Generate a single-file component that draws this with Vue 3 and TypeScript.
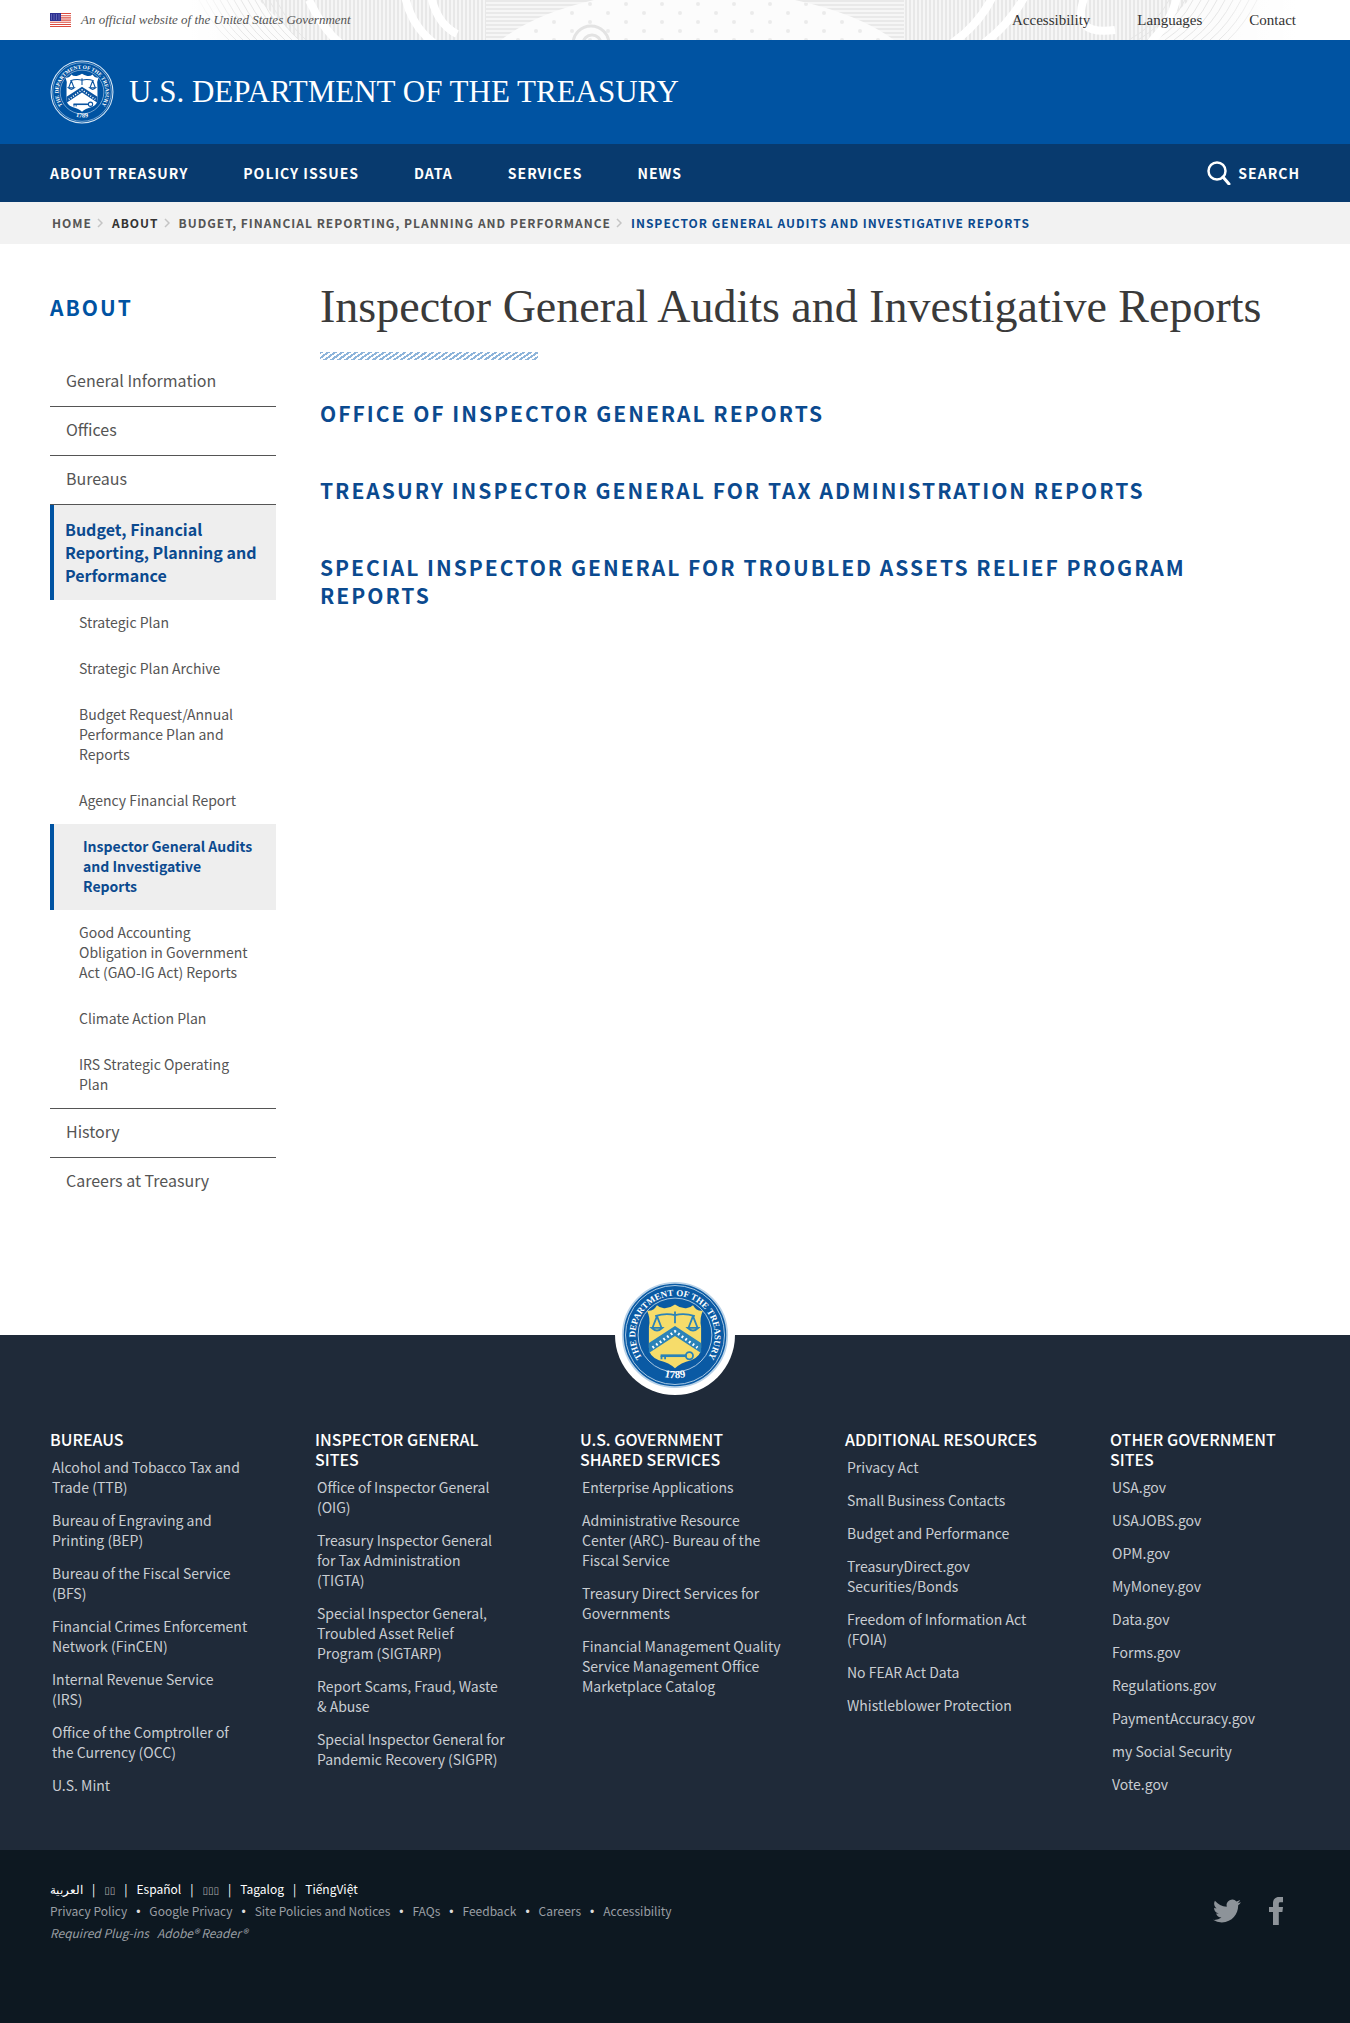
<script setup lang="ts">
interface NavItem { label: string; children?: NavItem[]; active?: boolean }
interface LinkGroup { title: string; links: string[] }

const utilityLinks: string[] = ['Accessibility', 'Languages', 'Contact']
const mainNav: string[] = ['About Treasury', 'Policy Issues', 'Data', 'Services', 'News']
const crumbs: string[] = ['Home', 'About', 'Budget, Financial Reporting, Planning and Performance']

const sideNav: NavItem[] = [
  { label: 'General Information' },
  { label: 'Offices' },
  { label: 'Bureaus' },
  {
    label: 'Budget, Financial Reporting, Planning and Performance',
    active: true,
    children: [
      { label: 'Strategic Plan' },
      { label: 'Strategic Plan Archive' },
      { label: 'Budget Request/Annual Performance Plan and Reports' },
      { label: 'Agency Financial Report' },
      { label: 'Inspector General Audits and Investigative Reports', active: true },
      { label: 'Good Accounting Obligation in Government Act (GAO-IG Act) Reports' },
      { label: 'Climate Action Plan' },
      { label: 'IRS Strategic Operating Plan' },
    ],
  },
  { label: 'History' },
  { label: 'Careers at Treasury' },
]

const reports: string[] = [
  'Office of Inspector General Reports',
  'Treasury Inspector General for Tax Administration Reports',
  'Special Inspector General for Troubled Assets Relief Program Reports',
]

const footerGroups: LinkGroup[] = [
  {
    title: 'Bureaus',
    links: [
      'Alcohol and Tobacco Tax and Trade (TTB)',
      'Bureau of Engraving and Printing (BEP)',
      'Bureau of the Fiscal Service\n(BFS)',
      'Financial Crimes Enforcement Network (FinCEN)',
      'Internal Revenue Service\n(IRS)',
      'Office of the Comptroller of\nthe Currency (OCC)',
      'U.S. Mint',
    ],
  },
  {
    title: 'Inspector General Sites',
    links: [
      'Office of Inspector General\n(OIG)',
      'Treasury Inspector General\nfor Tax Administration\n(TIGTA)',
      'Special Inspector General, Troubled Asset Relief\nProgram (SIGTARP)',
      'Report Scams, Fraud, Waste\n& Abuse',
      'Special Inspector General for Pandemic Recovery (SIGPR)',
    ],
  },
  {
    title: 'U.S. Government Shared Services',
    links: [
      'Enterprise Applications',
      'Administrative Resource Center (ARC)- Bureau of the Fiscal Service',
      'Treasury Direct Services for Governments',
      'Financial Management Quality Service Management Office Marketplace Catalog',
    ],
  },
  {
    title: 'Additional Resources',
    links: [
      'Privacy Act',
      'Small Business Contacts',
      'Budget and Performance',
      'TreasuryDirect.gov Securities/Bonds',
      'Freedom of Information Act (FOIA)',
      'No FEAR Act Data',
      'Whistleblower Protection',
    ],
  },
  {
    title: 'Other Government Sites',
    links: [
      'USA.gov', 'USAJOBS.gov', 'OPM.gov', 'MyMoney.gov', 'Data.gov',
      'Forms.gov', 'Regulations.gov', 'PaymentAccuracy.gov', 'my Social Security', 'Vote.gov',
    ],
  },
]

const languages: string[] = ['العربية', '▯▯', 'Español', '▯▯▯', 'Tagalog', 'TiếngViệt']
const policies: string[] = [
  'Privacy Policy', 'Google Privacy', 'Site Policies and Notices', 'FAQs',
  'Feedback', 'Careers', 'Accessibility',
]
const arcs: number[] = [0, 1, 2, 3, 4, 5, 6, 7, 8, 9, 10, 11]
</script>

<template>
  <div class="page">
    <svg class="defs" width="0" height="0" aria-hidden="true">
      <defs>
        <path id="seal-arc" d="M26.5 89 A44 44 0 1 1 93.5 89" />
        <path id="seal-year" d="M30 98 A50 50 0 0 0 90 98" />
        <symbol id="seal" viewBox="0 0 120 120">
          <circle class="s-disc" cx="60" cy="60" r="58" />
          <circle class="s-ring" cx="60" cy="60" r="58" stroke-width="2" />
          <circle class="s-ring" cx="60" cy="60" r="55" stroke-width="1" />
          <circle class="s-ring" cx="60" cy="60" r="41" stroke-width="1" />
          <text class="s-text" font-size="10"><textPath href="#seal-arc" startOffset="50%" text-anchor="middle">THE DEPARTMENT OF THE TREASURY</textPath></text>
          <text class="s-text" font-size="12"><textPath href="#seal-year" startOffset="50%" text-anchor="middle">1789</textPath></text>
          <path class="s-shield" d="M29 33 Q36 34 40 27 Q44 31 50 30 Q56 29 60 26 Q64 29 70 30 Q76 31 80 27 Q84 34 91 33 Q87 41 89 51 V74 Q89 84 78 88 Q66 91 60 97 Q54 91 42 88 Q31 84 31 74 V51 Q33 41 29 33Z" />
          <path class="s-band" d="M60 50 L89 69 V80 L60 61 L31 80 V69Z" />
          <path class="s-stars" d="M35 74 L60 56 L85 74" />
          <g class="s-line">
            <path d="M38 39 Q50 35 60 38 Q70 35 82 39 M60 34 V47 M40 39 L35 52 M40 39 L45 52 M80 39 L75 52 M80 39 L85 52" />
            <path d="M34 52 Q40 58 46 52Z M74 52 Q80 58 86 52Z" />
            <path d="M44 83 H73" stroke-width="3" />
            <path d="M45 83 V87 M49 83 V87" />
            <circle cx="76" cy="83" r="4" />
          </g>
        </symbol>
      </defs>
    </svg>

    <div class="topbar">
      <svg class="engraving" viewBox="0 0 1107 40" preserveAspectRatio="none" aria-hidden="true">
        <defs>
          <pattern id="dots" width="36" height="18" patternUnits="userSpaceOnUse">
            <circle cx="5" cy="4" r="2" fill="#ebebeb" />
            <circle cx="23" cy="13" r="2" fill="#ebebeb" />
          </pattern>
          <pattern id="vrules" width="4" height="40" patternUnits="userSpaceOnUse">
            <rect width="4" height="40" fill="#f6f6f6" />
            <rect width="2" height="40" fill="#e8e8e8" />
          </pattern>
          <pattern id="hrules" width="40" height="4" patternUnits="userSpaceOnUse">
            <rect width="40" height="4" fill="#f6f6f6" />
            <rect width="40" height="2" fill="#e9e9e9" />
          </pattern>
          <linearGradient id="fade" x1="0" x2="1">
            <stop offset="0" stop-color="#fff" />
            <stop offset="0.05" stop-color="#fff" stop-opacity="0" />
            <stop offset="0.93" stop-color="#fff" stop-opacity="0" />
            <stop offset="1" stop-color="#fff" />
          </linearGradient>
        </defs>
        <rect width="1107" height="40" fill="#fcfcfc" />
        <path d="M70 0 H297 V40 H110Z" fill="url(#vrules)" />
        <path d="M297 0 H405 Q345 14 312 40 H297Z" fill="url(#hrules)" />
        <path d="M405 0 Q345 14 312 40 H705 Q670 14 606 0Z" fill="url(#dots)" />
        <path d="M606 0 H715 V40 H705 Q670 14 606 0Z" fill="url(#hrules)" />
        <path d="M715 0 H1000 L960 40 H715Z" fill="url(#vrules)" />
        <g fill="none" stroke="#e6e6e6">
          <path v-for="n in arcs" :key="n" :d="`M${10 + n * 7} 0 Q${24 + n * 7} 26 ${40 + n * 7} 40`" />
          <path v-for="n in arcs" :key="`r${n}`" :d="`M${980 + n * 8} 0 Q${968 + n * 8} 24 ${940 + n * 9} 40`" />
        </g>
        <g fill="none" stroke="#fff" stroke-width="8">
          <path d="M120 0 Q134 30 152 44 M216 -4 Q222 26 246 44 M242 -4 Q248 24 268 34 M762 44 Q790 25 804 -4 M794 44 Q820 25 836 -4 M896 -4 Q880 36 926 30 M960 44 Q984 20 988 -4" />
        </g>
        <path d="M384 44 A18 18 0 0 1 420 44 M394 44 A9 9 0 0 1 412 44" fill="none" stroke="#e3e3e3" stroke-width="3" />
        <rect width="1107" height="40" fill="url(#fade)" />
      </svg>
      <div class="wrap topbar-row">
        <p class="official">
          <svg class="flag" viewBox="0 0 21 14" aria-hidden="true">
            <rect width="21" height="14" fill="#fff" />
            <path d="M0 .5H21M0 2.700H21M0 4.900H21M0 7.100H21M0 9.300H21M0 11.500H21M0 13.500H21" stroke="#dc4b3e" stroke-width="1.100" />
            <rect width="11" height="8" fill="#2c2f92" />
            <path d="M1 2H11M1 4H11M1 6H11" stroke="#aab0e0" stroke-width=".8" stroke-dasharray="1 1.500" />
          </svg>
          <span>An official website of the United States Government</span>
        </p>
        <nav class="utility" aria-label="Utility">
          <a v-for="l in utilityLinks" :key="l" href="#">{{ l }}</a>
        </nav>
      </div>
    </div>

    <header class="masthead">
      <a class="wrap brand" href="#">
        <svg class="brand-seal seal-light" role="img" aria-label="Treasury seal"><use href="#seal" /></svg>
        <span>U.S. DEPARTMENT OF THE TREASURY</span>
      </a>
    </header>

    <div class="navbar">
      <div class="wrap navbar-row">
        <nav class="main-nav" aria-label="Main">
          <a v-for="n in mainNav" :key="n" href="#">{{ n }}</a>
        </nav>
        <button class="search" type="button">
          <svg viewBox="0 0 24 24" aria-hidden="true">
            <circle cx="10" cy="10" r="8.500" fill="none" stroke="#fff" stroke-width="2.500" />
            <path d="M16 16 L22 23" stroke="#fff" stroke-width="3" stroke-linecap="round" />
          </svg>
          Search
        </button>
      </div>
    </div>

    <nav class="crumb-bar" aria-label="Breadcrumb">
      <ol class="wrap crumbs">
        <li v-for="(c, i) in crumbs" :key="c">
          <a href="#" :class="{ dark: i === 1 }">{{ c }}</a>
          <svg viewBox="0 0 6 10" aria-hidden="true"><path d="M1 1 L5 5 L1 9" fill="none" stroke="#c4c4c4" stroke-width="1.500" /></svg>
        </li>
        <li class="current" aria-current="page">Inspector General Audits and Investigative Reports</li>
      </ol>
    </nav>

    <div class="wrap content">
      <aside>
        <h2 class="side-title"><a href="#">About</a></h2>
        <ul class="side-nav">
          <li v-for="item in sideNav" :key="item.label">
            <a href="#" :class="{ active: item.active }">{{ item.label }}</a>
            <ul v-if="item.children" class="sub-nav">
              <li v-for="child in item.children" :key="child.label">
                <a href="#" :class="{ active: child.active }">{{ child.label }}</a>
              </li>
            </ul>
          </li>
        </ul>
      </aside>
      <main>
        <h1>Inspector General Audits and Investigative Reports</h1>
        <div class="hatch"></div>
        <h2 v-for="r in reports" :key="r" class="report"><a href="#">{{ r }}</a></h2>
      </main>
    </div>

    <footer>
      <div class="footer-main">
        <div class="badge">
          <svg class="seal-color" role="img" aria-label="Treasury seal"><use href="#seal" /></svg>
        </div>
        <div class="wrap groups">
          <section v-for="g in footerGroups" :key="g.title">
            <h3>{{ g.title }}</h3>
            <ul>
              <li v-for="l in g.links" :key="l"><a href="#">{{ l }}</a></li>
            </ul>
          </section>
        </div>
      </div>
      <div class="footer-legal">
        <div class="wrap legal-row">
          <div>
            <ul class="languages">
              <li v-for="(l, i) in languages" :key="l"><a href="#" :class="{ boxes: i === 1 || i === 3 }">{{ l }}</a></li>
            </ul>
            <ul class="policies">
              <li v-for="p in policies" :key="p"><a href="#">{{ p }}</a></li>
            </ul>
            <p class="plugins"><span>Required Plug-ins</span><a href="#">Adobe® Reader®</a></p>
          </div>
          <div class="social">
            <a href="#" aria-label="Twitter">
              <svg width="28" height="28" viewBox="0 0 24 24"><path fill="#8d9399" d="M23.950 4.570a10 10 0 0 1-2.820.770 4.960 4.960 0 0 0 2.160-2.720c-.950.550-2 .950-3.130 1.180a4.920 4.920 0 0 0-8.380 4.480C7.690 8.100 4.070 6.130 1.640 3.160a4.820 4.820 0 0 0-.670 2.480c0 1.710.870 3.210 2.190 4.100a4.900 4.900 0 0 1-2.230-.620v.060a4.920 4.920 0 0 0 3.950 4.830 5 5 0 0 1-2.210.080 4.940 4.940 0 0 0 4.600 3.420A9.870 9.870 0 0 1 0 19.540a14 14 0 0 0 7.550 2.210c9.050 0 14-7.500 14-13.980 0-.210 0-.420-.020-.630a9.940 9.940 0 0 0 2.420-2.570z" /></svg>
            </a>
            <a href="#" aria-label="Facebook">
              <svg width="14" height="28" viewBox="0 0 14 28"><path fill="#8d9399" d="M4 28V15H0V10H4V6.500C4 2.200 6.300 0 10 0H14V5.200H11.500C10 5.200 9.800 5.800 9.800 7V10H14L13.400 15H9.800V28Z" /></svg>
            </a>
          </div>
        </div>
      </div>
    </footer>
  </div>
</template>

<style>
body { margin: 0; background: #fff; }
</style>

<style scoped>
.page { font-family: "Noto Sans CJK SC", "Noto Sans", sans-serif; color: #555; font-size: 14px; line-height: 20px; }
.page * { box-sizing: border-box; }
a { color: inherit; text-decoration: none; }
ul, ol { list-style: none; margin: 0; padding: 0; }
h1, h2, h3, p { margin: 0; }
.defs { position: absolute; }
.wrap { padding-left: 50px; padding-right: 50px; }

.s-disc { fill: var(--disc); }
.s-ring { fill: none; stroke: var(--ring); }
.s-text { fill: #fff; font-family: "Liberation Serif", serif; font-weight: 700; }
.s-shield { fill: var(--shield); }
.s-band { fill: var(--ink); }
.s-stars { fill: none; stroke: #fff; stroke-width: 3; stroke-dasharray: 2 3; }
.s-line { fill: none; stroke: var(--ink); stroke-width: 2; }
.seal-light { --disc: #0053a2; --ring: #d5e6f5; --shield: #fff; --ink: #0b54a0; }
.seal-color { --disc: #0a5aa4; --ring: #b9d2e8; --shield: #f6dc6a; --ink: #2b83b8; }

.topbar { position: relative; height: 40px; overflow: hidden; font-family: "Liberation Serif", serif; }
.engraving { position: absolute; top: 0; left: 14%; width: 82%; height: 40px; }
.topbar-row { position: relative; display: flex; justify-content: space-between; align-items: center; height: 40px; }
.official { display: flex; align-items: center; gap: 10px; font-size: 13px; font-style: italic; color: #555; }
.flag { width: 21px; height: 14px; }
.utility { display: flex; gap: 47px; padding-right: 4px; font-size: 15px; color: #333; }

.masthead { background: #0053a2; }
.brand { display: flex; align-items: center; gap: 15px; height: 104px; color: #fff; font-family: "Liberation Serif", serif; font-size: 31px; line-height: 40px; }
.brand-seal { width: 64px; height: 64px; }

.navbar { background: #083a6e; }
.navbar-row { display: flex; justify-content: space-between; align-items: center; height: 58px; }
.main-nav { display: flex; gap: 55px; }
.main-nav a, .search { font-size: 14px; font-weight: 700; letter-spacing: 1px; text-transform: uppercase; color: #fff; }
.search { display: flex; align-items: center; gap: 7px; border: 0; padding: 0; background: none; font-family: inherit; }
.search svg { width: 24px; height: 24px; }

.crumb-bar { background: #f2f2f2; }
.crumbs { display: flex; align-items: center; height: 42px; padding-left: 52px; font-size: 12px; font-weight: 700; letter-spacing: 1px; text-transform: uppercase; white-space: nowrap; }
.crumbs li { display: flex; align-items: center; }
.crumbs svg { width: 6px; height: 10px; margin: 0 9px 0 5px; }
.crumbs .dark { color: #333; }
.crumbs .current { color: #0b4a8f; }

.content { display: grid; grid-template-columns: 226px minmax(0, 1fr); column-gap: 44px; padding-bottom: 129px; }
.side-title { padding-top: 48px; font-size: 21px; line-height: 30px; letter-spacing: 2px; text-transform: uppercase; color: #0053a2; }
.side-nav { margin-top: 36px; font-size: 16px; line-height: 23px; }
.side-nav > li > a { display: block; padding: 11px 16px 14px; }
.side-nav > li { border-bottom: 1px solid #555; }
.side-nav > li:last-child { border-bottom: 0; }
.side-nav > li > .active { padding: 13px 11px; }
.side-nav .active { background: #eee; border-left: 4px solid #0053a2; color: #0b4a8f; font-weight: 700; }
.sub-nav { font-size: 14px; line-height: 20px; }
.sub-nav a { display: block; padding: 12px 20px 14px 29px; }

h1 { padding-top: 38px; font-family: "Liberation Serif", serif; font-size: 46px; font-weight: 400; line-height: 50px; color: #3a3a3a; }
.hatch { width: 218px; height: 8px; margin: 20px 0 39px; background: repeating-linear-gradient(145deg, #8db4da 0 2px, #fff 2px 4px); }
.report { margin-bottom: 49px; font-size: 21px; line-height: 28px; letter-spacing: 2px; text-transform: uppercase; color: #0b4a8f; }

.footer-main { position: relative; padding: 94px 0 55px; background: #1f2a39; }
.badge { position: absolute; top: -60px; left: 50%; display: grid; place-items: center; width: 120px; height: 120px; margin-left: -60px; border-radius: 50%; background: #fff; }
.badge svg { width: 108px; height: 108px; }
.groups { display: grid; grid-template-columns: repeat(5, minmax(0, 1fr)); column-gap: 63px; padding-right: 38px; color: #c9cdd2; white-space: pre-line; }
.groups h3 { margin-bottom: 8px; font-size: 16px; font-weight: 500; line-height: 20px; text-transform: uppercase; color: #fff; }
.groups ul { display: grid; gap: 13px; padding-left: 2px; }
.footer-legal { padding: 28px 0 79px; background: #0d1821; }
.legal-row { display: flex; justify-content: space-between; font-size: 12px; line-height: 22px; color: #9a9fa4; }
.languages, .policies { display: flex; height: 22px; }
.languages { color: #fff; }
.languages li + li::before { content: "|"; margin: 0 9px; }
.languages .boxes { font-family: "DejaVu Sans", sans-serif; font-size: 10px; color: #aaa; }
.policies li + li::before { content: "•"; margin: 0 9px; font-family: "Liberation Sans", sans-serif; color: #ddd; }
.plugins { display: flex; gap: 8px; font-style: italic; }
.social { display: flex; align-items: center; gap: 28px; padding-right: 17px; }
.social a { display: block; height: 28px; }
</style>
